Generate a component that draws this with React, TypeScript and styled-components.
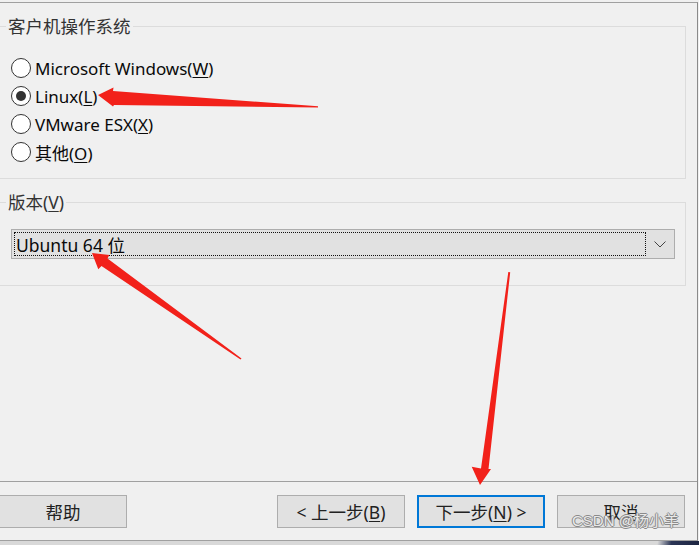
import React from 'react';
import styled, { createGlobalStyle } from 'styled-components';

const Global = createGlobalStyle`
  html, body { margin: 0; padding: 0; background: #f0f0f0; overflow: hidden; }
  body { width: 699px; height: 545px; font-family: "Noto Sans", "Noto Sans CJK SC", sans-serif; }
  * { box-sizing: border-box; }
`;

const Page = styled.div`
  position: relative;
  width: 699px;
  height: 545px;
  overflow: hidden;
  background: #f0f0f0;
  padding-top: 2px;
`;

const Frame = styled.div`
  width: 698px;
  height: 539px;
  border-top: 1px solid #a0a0a0;
  border-right: 1px solid #8a8a8a;
  border-bottom: 1px solid #a0a0a0;
  background: #f0f0f0;
  display: flex;
  flex-direction: column;
`;

const BottomStrip = styled.div`
  height: 4px;
  width: 699px;
  background: linear-gradient(100deg, #d9d9d9 0%, #d9d9d9 94%, #2b3556 96%, #1c2440 100%);
`;

const Group = styled.fieldset<{ $pt: number; $pb: number }>`
  margin: 11px 11px 0 -10px;
  padding: ${p => p.$pt}px 10px ${p => p.$pb}px 17px;
  border: 1px solid #dcdcdc;
  min-width: 0;
`;

const Legend = styled.legend`
  margin-left: -2px;
  padding: 0 2px;
  font-size: 17.5px;
  line-height: 24px;
  color: #333;
`;

const RadioList = styled.div`
  display: flex;
  flex-direction: column;
  padding-left: 3px;
`;

const RadioRow = styled.label`
  height: 28px;
  display: flex;
  align-items: center;
  gap: 4px;
  font-size: 17px;
  color: #0a0a0a;
`;

const RadioCircle = styled.span<{ $checked?: boolean }>`
  width: 20px;
  height: 20px;
  border-radius: 50%;
  border: 1px solid #333;
  background: #fff;
  display: flex;
  align-items: center;
  justify-content: center;
  flex: none;
  &::after {
    content: '';
    width: 10px;
    height: 10px;
    border-radius: 50%;
    background: #333;
    display: ${p => (p.$checked ? 'block' : 'none')};
  }
`;

const Key = styled.u`
  text-decoration-thickness: 1px;
  text-underline-offset: 2px;
`;

const Select = styled.div`
  margin-left: 3px;
  height: 30px;
  background: #e1e1e1;
  border: 1px solid #adadad;
  display: flex;
`;

const SelectValue = styled.div`
  flex: 1;
  margin: 2px 0 2px 2px;
  border: 1px dotted #111;
  display: flex;
  align-items: center;
  padding-left: 1px;
  font-size: 17.5px;
  color: #0a0a0a;
`;

const SelectArrow = styled.div`
  width: 28px;
  display: flex;
  align-items: center;
  justify-content: center;
`;

const Footer = styled.div`
  margin-top: auto;
  border-top: 1px solid #a0a0a0;
  padding: 13px 12px 12px 0;
  display: flex;
  justify-content: space-between;
`;

const ButtonGroup = styled.div`
  display: flex;
  gap: 12px;
`;

const Button = styled.button<{ $primary?: boolean; $offset?: number }>`
  width: 128px;
  height: 33px;
  margin-left: ${p => p.$offset ?? 0}px;
  background: #e1e1e1;
  border: ${p => (p.$primary ? '2px solid #0078d7' : '1px solid #adadad')};
  font-family: "Noto Sans", "Noto Sans CJK SC", sans-serif;
  font-size: 17.5px;
  line-height: 24px;
  color: #222;
  padding: 0;
  text-align: center;
  white-space: nowrap;
`;

const Watermark = styled.div`
  position: absolute;
  left: 572px;
  top: 511px;
  font-family: "Liberation Sans", "Noto Sans CJK SC", sans-serif;
  font-size: 15px;
  line-height: 20px;
  color: rgba(240, 240, 240, 0.95);
  text-shadow: 1px 0 0 #8a8a8a, -1px 0 0 #8a8a8a, 0 1px 0 #8a8a8a, 0 -1px 0 #8a8a8a;
  pointer-events: none;
`;

const Overlay = styled.svg`
  position: absolute;
  left: 0;
  top: 0;
  pointer-events: none;
`;

export default function App() {
  return (
    <>
      <Global />
      <Page>
        <Frame>
          <Group $pt={16} $pb={12}>
            <Legend>客户机操作系统</Legend>
            <RadioList>
              <RadioRow>
                <RadioCircle />
                <span>Microsoft Windows(<Key>W</Key>)</span>
              </RadioRow>
              <RadioRow>
                <RadioCircle $checked />
                <span>Linux(<Key>L</Key>)</span>
              </RadioRow>
              <RadioRow>
                <RadioCircle />
                <span>VMware ESX(<Key>X</Key>)</span>
              </RadioRow>
              <RadioRow>
                <RadioCircle />
                <span>其他(<Key>O</Key>)</span>
              </RadioRow>
            </RadioList>
          </Group>
          <Group $pt={15} $pb={26}>
            <Legend>版本(<Key>V</Key>)</Legend>
            <Select>
              <SelectValue>Ubuntu 64 位</SelectValue>
              <SelectArrow>
                <svg width="12" height="7" viewBox="0 0 12 7">
                  <polyline points="0.5,0.5 6,6 11.5,0.5" fill="none" stroke="#444" strokeWidth="1" />
                </svg>
              </SelectArrow>
            </Select>
          </Group>
          <Footer>
            <Button $offset={-1}>帮助</Button>
            <ButtonGroup>
              <Button>&lt; 上一步(<Key>B</Key>)</Button>
              <Button $primary>下一步(<Key>N</Key>) &gt;</Button>
              <Button>取消</Button>
            </ButtonGroup>
          </Footer>
        </Frame>
        <BottomStrip />
        <Watermark>CSDN @杨小羊</Watermark>
        <Overlay width="699" height="545" viewBox="0 0 699 545">
          <polygon
            fill="#f2211a"
            points="98,95 113.5,87.5 113,91 318,106.3 318,107.6 114,105 113,106.5"
          />
          <polygon
            fill="#f2211a"
            points="92,253 109.3,255 107.5,258.5 241.5,358.6 240.5,359.6 101.5,266 98.3,269.3"
          />
          <polygon
            fill="#f2211a"
            points="480,485 471.7,466.7 481,468.5 508.3,272 510.2,272.3 488.5,469 491,469"
          />
        </Overlay>
      </Page>
    </>
  );
}
